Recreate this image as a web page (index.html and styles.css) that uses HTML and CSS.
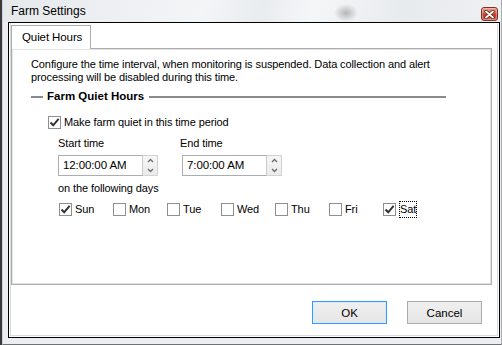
FILE: index.html
```html
<!DOCTYPE html>
<html>
<head>
<meta charset="utf-8">
<link rel="stylesheet" href="styles.css">
</head>
<body>
<div class="window">
  <div class="titlebar">
    <span class="title">Farm Settings</span>
    <span class="close"><svg width="11" height="9" viewBox="0 0 11 9"><path d="M2 1.5 L9 7.5 M9 1.5 L2 7.5" stroke="#5a1a10" stroke-width="3.2" stroke-linecap="round"/><path d="M2 1.5 L9 7.5 M9 1.5 L2 7.5" stroke="#ffffff" stroke-width="1.8" stroke-linecap="round"/></svg></span>
  </div>
  <div class="client">
    <div class="client-inner">
      <div class="tabs"><div class="tab">Quiet Hours</div></div>
      <div class="panel">
        <p class="desc">Configure the time interval, when monitoring is suspended. Data collection and alert<br>processing will be disabled during this time.</p>
        <div class="group-head"><span class="rule short"></span><span class="group-title">Farm Quiet Hours</span><span class="rule long"></span></div>
        <div class="check main-check"><span class="box"><svg width="11" height="11" viewBox="0 0 11 11"><path d="M1.5 5.5 L4.2 8.3 L9.6 1.8" fill="none" stroke="#333" stroke-width="2"/></svg></span><span class="lbl">Make farm quiet in this time period</span></div>
        <div class="times">
          <div class="field">
            <div class="label">Start time</div>
            <div class="spin"><div class="spin-text">12:00:00 AM</div><div class="arrows"><span class="arr"><svg width="7" height="5" viewBox="0 0 7 5"><path d="M1 4 L3.5 1.5 L6 4" fill="none" stroke="#6b6b6b" stroke-width="1.3"/></svg></span><span class="arr"><svg width="7" height="5" viewBox="0 0 7 5"><path d="M1 1 L3.5 3.5 L6 1" fill="none" stroke="#6b6b6b" stroke-width="1.3"/></svg></span></div></div>
          </div>
          <div class="field">
            <div class="label end-label">End time</div>
            <div class="spin"><div class="spin-text">7:00:00 AM</div><div class="arrows"><span class="arr"><svg width="7" height="5" viewBox="0 0 7 5"><path d="M1 4 L3.5 1.5 L6 4" fill="none" stroke="#6b6b6b" stroke-width="1.3"/></svg></span><span class="arr"><svg width="7" height="5" viewBox="0 0 7 5"><path d="M1 1 L3.5 3.5 L6 1" fill="none" stroke="#6b6b6b" stroke-width="1.3"/></svg></span></div></div>
          </div>
        </div>
        <div class="label days-label">on the following days</div>
        <div class="days">
          <div class="check day"><span class="box"><svg width="11" height="11" viewBox="0 0 11 11"><path d="M1.5 5.5 L4.2 8.3 L9.6 1.8" fill="none" stroke="#333" stroke-width="2"/></svg></span><span class="lbl">Sun</span></div>
          <div class="check day"><span class="box"></span><span class="lbl">Mon</span></div>
          <div class="check day"><span class="box"></span><span class="lbl">Tue</span></div>
          <div class="check day"><span class="box"></span><span class="lbl">Wed</span></div>
          <div class="check day"><span class="box"></span><span class="lbl">Thu</span></div>
          <div class="check day"><span class="box"></span><span class="lbl">Fri</span></div>
          <div class="check day"><span class="box"><svg width="11" height="11" viewBox="0 0 11 11"><path d="M1.5 5.5 L4.2 8.3 L9.6 1.8" fill="none" stroke="#333" stroke-width="2"/></svg></span><span class="lbl focus">Sat</span></div>
        </div>
      </div>
      <div class="footer">
        <button class="btn ok">OK</button>
        <button class="btn">Cancel</button>
      </div>
    </div>
  </div>
</div>
</body>
</html>
```

FILE: styles.css
```css
* { box-sizing: border-box; }
html, body { margin: 0; padding: 0; }
body {
  width: 502px;
  height: 345px;
  overflow: hidden;
  background: #3a3a3a;
  font-family: "Liberation Sans", Arial, sans-serif;
  font-size: 11px;
  letter-spacing: -0.1px;
  color: #000;
}
.window {
  margin-left: 2px;
  width: 500px;
  height: 345px;
  background: #eceef1;
  border-left: 1px solid #cfd3d7;
  border-right: 1px solid #a9adb1;
  border-bottom: 1px solid #6f7275;
  display: flex;
  flex-direction: column;
}
.titlebar {
  height: 22px;
  flex: none;
  display: flex;
  align-items: flex-start;
  padding-left: 8px;
  padding-right: 3px;
  background:
    radial-gradient(ellipse 12px 9px at 343px 13px, rgba(110,110,110,0.45), rgba(110,110,110,0) 100%),
    linear-gradient(100deg, #e6e9ec 0%, #f3f5f7 40%, #e9ecef 52%, #f5f6f8 62%, #e8ebee 80%, #eef0f2 100%);
}
.title {
  font-size: 12px;
  letter-spacing: 0;
  line-height: 15px;
  margin-top: 4px;
  flex: 1;
  color: #000;
}
.close {
  margin-top: 7px;
  width: 17px;
  height: 14px;
  border: 1px solid #7a3226;
  border-radius: 3px;
  background: linear-gradient(#eaa090, #d3614a 45%, #c43c24 55%, #d76a4f);
  box-shadow: inset 0 0 0 1px rgba(255,255,255,0.3);
  display: flex;
  align-items: center;
  justify-content: center;
}
.close svg { display: block; }
.client {
  margin-left: 5px;
  width: 492px;
  height: 316px;
  flex: none;
  border: 1px solid #000;
  background: #fff;
  display: flex;
}
.client-inner {
  flex: 1;
  margin: 0 1px 1px 1px;
  border: 1px solid #dadada;
  border-top: none;
  display: flex;
  flex-direction: column;
}
.tabs {
  padding-top: 2px;
  display: flex;
}
.tab {
  width: 80px;
  height: 24px;
  margin-bottom: -1px;
  position: relative;
  z-index: 1;
  background: #fff;
  border: 1px solid #adadad;
  border-bottom: none;
  padding-left: 10px;
  line-height: 22px;
  font-size: 11.5px;
}
.panel {
  height: 237px;
  margin-right: 5px;
  border: 1px solid #adadad;
  box-shadow: inset 0 0 0 1px #e2e2e2;
  padding: 9px 0 0 19px;
  display: flex;
  flex-direction: column;
}
.desc {
  margin: 0;
  line-height: 13px;
}
.group-head {
  margin-top: 6px;
  margin-right: 45px;
  height: 13px;
  display: flex;
  align-items: center;
}
.rule {
  height: 2px;
  background: #8a8a8a;
}
.rule.short { width: 12px; margin-right: 4px; }
.rule.long { flex: 1; margin-left: 5px; }
.group-title {
  font-weight: bold;
  font-size: 11.5px;
  letter-spacing: 0;
  line-height: 13px;
}
.check {
  display: flex;
  align-items: center;
}
.box {
  width: 13px;
  height: 13px;
  flex: none;
  border: 1px solid #8e8f8f;
  background: #fff;
  display: flex;
  align-items: center;
  justify-content: center;
}
.box svg { display: block; }
.lbl { margin-left: 3px; line-height: 13px; }
.main-check {
  margin-top: 13px;
  margin-left: 17px;
  height: 13px;
}
.times {
  margin-top: 8px;
  margin-left: 27px;
  display: flex;
  gap: 24px;
}
.field {
  display: flex;
  flex-direction: column;
  gap: 5px;
}
.label { line-height: 13px; }
.end-label { margin-left: -2px; }
.spin {
  width: 100px;
  height: 21px;
  display: flex;
}
.spin-text {
  flex: 1;
  border: 1px solid #abadb3;
  border-right-color: #c9cbcf;
  padding-left: 4px;
  line-height: 19px;
  font-size: 11.5px;
  background: #fff;
}
.arrows {
  width: 15px;
  border: 1px solid #d2d2d2;
  border-left: none;
  background: linear-gradient(#f6f6f6, #ebebeb);
  display: flex;
  flex-direction: column;
}
.arr {
  flex: 1;
  display: flex;
  align-items: center;
  justify-content: center;
}
.arr svg { display: block; }
.days-label {
  margin-top: 6px;
  margin-left: 27px;
}
.days {
  margin-top: 6px;
  margin-left: 28px;
  display: flex;
}
.day {
  width: 54px;
  height: 17px;
}
.focus {
  border: 1px dotted #000;
  padding: 1px 0 1px 0;
  line-height: 13px;
}
.footer {
  flex: 1;
  display: flex;
  justify-content: flex-end;
  align-items: flex-start;
  padding-top: 16px;
  padding-right: 15px;
  gap: 20px;
}
.btn {
  width: 75px;
  height: 23px;
  margin: 0;
  padding: 0;
  font-family: "Liberation Sans", Arial, sans-serif;
  font-size: 11.5px;
  color: #000;
  border: 1px solid #acacac;
  background: linear-gradient(#f0f0f0, #e5e5e5);
}
.btn.ok {
  border-color: #3399ff;
  box-shadow: inset 0 0 0 1px #dcecfc;
}
```
